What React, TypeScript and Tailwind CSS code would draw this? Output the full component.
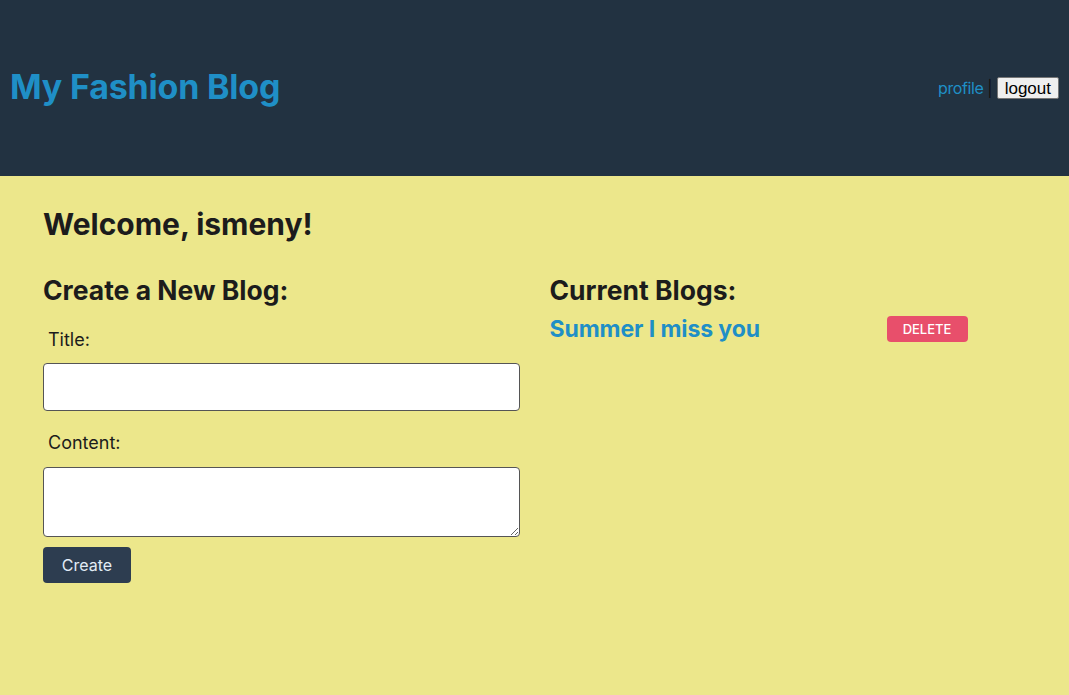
export default function App() {
  return (
    <div className="min-h-[695px] bg-[#ece78b] font-['Inter',sans-serif] text-[#1c1c1c]">
      {/* Header */}
      <header className="h-[176px] bg-[#223241] flex items-center justify-between px-[10px]">
        <h1 className="text-[34px] font-bold text-[#1f8fc6] tracking-[-0.2px] -mt-[3px]">My Fashion Blog</h1>
        <div className="flex items-center text-[16px]">
          <a className="text-[#1f8fc6] tracking-[-0.4px]">profile</a>
          <span className="text-[#111] mx-[4px]">|</span>
          <button className="bg-[#efefef] text-black border border-[#767676] rounded-[2px] px-[7px] h-[22px] leading-none text-[17px] font-['Liberation_Sans',sans-serif]">
            logout
          </button>
        </div>
      </header>

      <main className="px-[43px] pt-[28px]">
        <h2 className="text-[30px] font-bold leading-[40px]">Welcome, ismeny!</h2>

        <div className="grid grid-cols-2 gap-[30px] mt-[30px]">
          {/* Create form */}
          <div>
            <h3 className="text-[26.5px] font-bold leading-[32px]">Create a New Blog:</h3>
            <label className="block text-[18px] ml-[5px] mt-[22px] leading-[24px]">Title:</label>
            <input className="mt-[11px] block w-full h-[48px] bg-white border border-[#555] rounded-[4px]" />
            <label className="block text-[18px] ml-[5px] mt-[20px] leading-[24px]">Content:</label>
            <textarea className="mt-[12px] block w-full h-[70px] bg-white border border-[#555] rounded-[4px]" />
            <button className="mt-[10px] w-[88px] h-[36px] bg-[#2d3d50] text-[#e2ecf6] text-[16px] rounded-[4px]">
              Create
            </button>
          </div>

          {/* Blog list */}
          <div>
            <h3 className="text-[26.5px] font-bold leading-[32px]">Current Blogs:</h3>
            <div className="flex items-center justify-between w-[418px] mt-[6px]">
              <a className="text-[23px] font-bold text-[#1f8fc6] tracking-[-0.1px]">Summer I miss you</a>
              <button className="bg-[#e84f6b] text-white text-[13px] font-medium uppercase rounded-[4px] w-[81px] h-[26px]">
                Delete
              </button>
            </div>
          </div>
        </div>
      </main>
    </div>
  );
}
